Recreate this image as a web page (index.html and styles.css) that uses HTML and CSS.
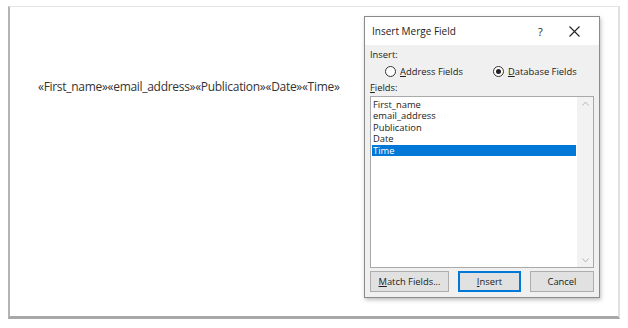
FILE: index.html
```html
<!DOCTYPE html>
<html lang="en">
<head>
  <meta charset="UTF-8">
  <title>Insert Merge Field</title>
  <link rel="stylesheet" href="styles.css">
</head>
<body>
  <div class="page">
    <div class="merge-line">«First_name»«email_address»«Publication»«Date»«Time»</div>

    <div class="dialog">
      <div class="titlebar">
        <span class="title">Insert Merge Field</span>
        <span class="help">?</span>
        <span class="close">
          <svg width="11" height="11" viewBox="0 0 11 11"><path d="M0.5 0.5 L10.5 10.5 M10.5 0.5 L0.5 10.5" stroke="#222" stroke-width="1.1" fill="none"/></svg>
        </span>
      </div>
      <div class="dialog-body">
        <div class="label">Insert:</div>
        <div class="radios">
          <label class="radio"><span class="circle"></span><span><u>A</u>ddress Fields</span></label>
          <label class="radio"><span class="circle checked"></span><span><u>D</u>atabase Fields</span></label>
        </div>
        <div class="label"><u>F</u>ields:</div>
        <div class="listbox">
          <ul class="items">
            <li>First_name</li>
            <li>email_address</li>
            <li>Publication</li>
            <li>Date</li>
            <li class="selected">Time</li>
          </ul>
          <div class="scrollbar">
            <svg width="7" height="5" viewBox="0 0 7 5"><path d="M0.5 4.5 L3.5 1 L6.5 4.5" stroke="#b8b8b8" fill="none"/></svg>
            <svg width="7" height="5" viewBox="0 0 7 5"><path d="M0.5 0.5 L3.5 4 L6.5 0.5" stroke="#b8b8b8" fill="none"/></svg>
          </div>
        </div>
        <div class="buttons">
          <button class="btn match"><u>M</u>atch Fields...</button>
          <button class="btn insert"><u>I</u>nsert</button>
          <button class="btn cancel">Cancel</button>
        </div>
      </div>
    </div>
  </div>
</body>
</html>
```

FILE: styles.css
```css
body {
  margin: 0;
  background: #fff;
  font-family: "Open Sans", "Noto Sans", sans-serif;
  color: #222;
}
.page {
  margin: 6px 8px 10px 8px;
  height: 309px;
  border-top: 1px solid #e4e4e4;
  border-right: 2px solid #e0e0e0;
  border-left: 2px solid #b4b4b4;
  border-bottom: 3px solid #a8a8a8;
  display: flex;
  align-items: flex-start;
}
.merge-line {
  margin-top: 71px;
  margin-left: 28px;
  width: 326px;
  font-family: "Open Sans", sans-serif;
  font-size: 12px;
  letter-spacing: -0.3px;
  color: #333;
  white-space: nowrap;
}
.dialog {
  margin-top: 9px;
  width: 234px;
  height: 280px;
  border: 1px solid #8a8a8a;
  background: #f0f0f0;
  box-shadow: 1px 2px 4px rgba(0, 0, 0, 0.25);
  display: flex;
  flex-direction: column;
}
.titlebar {
  height: 28px;
  background: #fff;
  display: flex;
  align-items: center;
  padding-left: 7px;
  font-size: 10px;
  color: #222;
}
.title {
  flex: 1;
}
.help {
  width: 25px;
  font-size: 11px;
}
.close {
  width: 30px;
  display: flex;
  align-items: center;
  padding-left: 6px;
}
.dialog-body {
  flex: 1;
  padding: 3px 5px 0 5px;
  font-size: 9.4px;
  color: #222;
}
.label {
  height: 14px;
  line-height: 14px;
}
.radios {
  display: flex;
  height: 19px;
  align-items: center;
  padding-left: 15px;
  gap: 30px;
}
.radio {
  display: flex;
  align-items: center;
  gap: 4px;
}
.circle {
  width: 9px;
  height: 9px;
  border: 1px solid #333;
  border-radius: 50%;
  background: #fff;
  position: relative;
}
.circle.checked::after {
  content: "";
  position: absolute;
  left: 2px;
  top: 2px;
  width: 5px;
  height: 5px;
  border-radius: 50%;
  background: #222;
}
.listbox {
  margin-top: 1px;
  height: 170px;
  border: 1px solid #a9a9a9;
  background: #fff;
  display: flex;
}
.items {
  list-style: none;
  margin: 0;
  padding: 2px 1px 0 1px;
  flex: 1;
}
.items li {
  height: 11.4px;
  line-height: 11.4px;
  padding-left: 1px;
}
.items li.selected {
  background: #0078d7;
  color: #fff;
}
.scrollbar {
  width: 16px;
  background: #f2f2f2;
  display: flex;
  flex-direction: column;
  align-items: center;
  justify-content: space-between;
  padding: 4px 0;
}
.buttons {
  margin-top: 3px;
  display: flex;
  gap: 9px;
}
.btn {
  height: 21px;
  border: 1px solid #adadad;
  background: #e1e1e1;
  font-family: "Open Sans", sans-serif;
  font-size: 9.4px;
  color: #222;
  padding: 0;
}
.match {
  width: 79px;
}
.insert {
  width: 63px;
  border: 2px solid #0078d7;
}
.cancel {
  width: 64px;
}
```
